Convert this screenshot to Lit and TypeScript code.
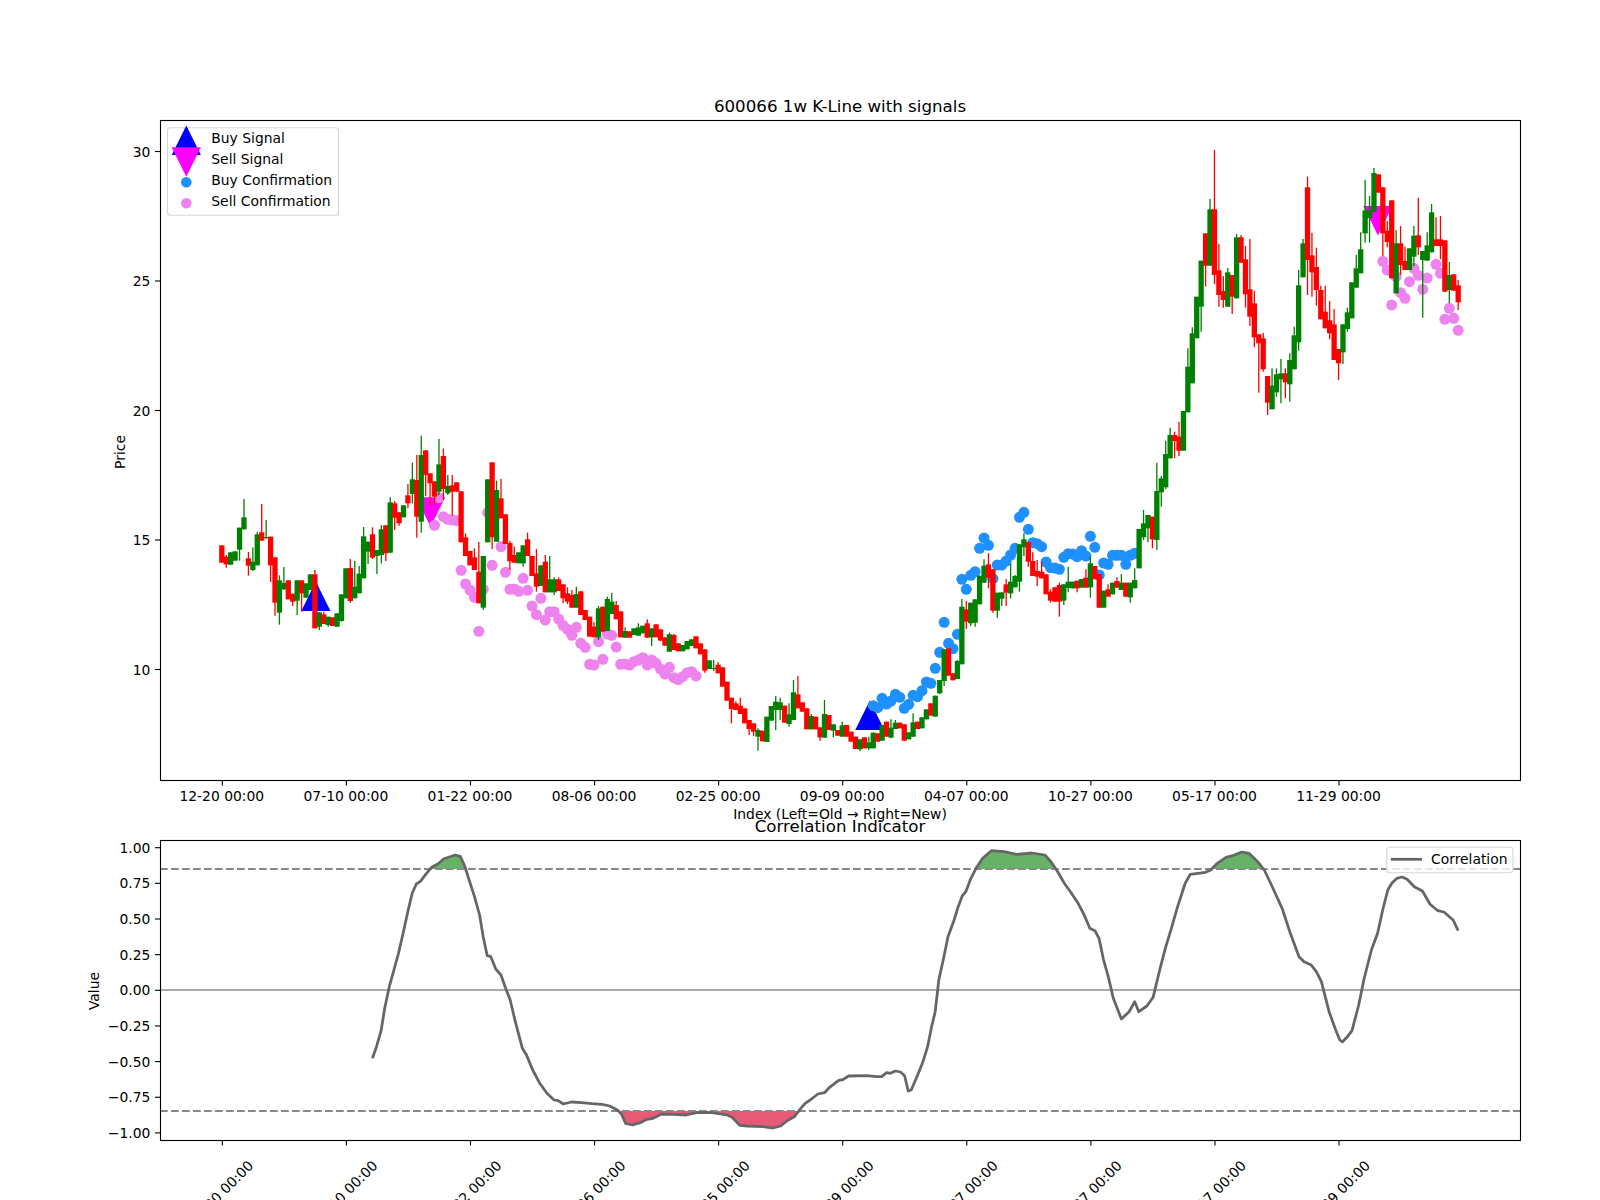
import { LitElement, html, svg, css } from "lit";
import { customElement } from "lit/decorators.js";

const X0 = 221.82;
const DX = 4.4314;
const xi = (i: number) => X0 + DX * i;

type Bar = { c: string; t: number; b: number; wt: number; wb: number };

const SEGMENTS: [number, string][] = [
  [420, `r 376 428;r 410 433 405 443;g 397 434;g 394 422;g 323 389 323 422;g 292 328 237 328;r 415 437 396 467;g 425 450 382 453;g 343 436 335 436;r 337 362 252 362;
g 351 354 300 357;r 350 436 350 486;r 412 548 412 587;g 481 578 466 614;g 489 508 441 510;r 481 538;r 521 545 521 558;g 481 542 481 585;r 481 520 481 575;g 490 533;
g 463 510;r 463 625 450 625;g 577 620 577 630;r 583 612 575 612;g 590 615 590 620;r 592 618;g 580 620;g 523 603 523 605;g 445 535;r 444 543 417 548;
g 500 535 423 535;g 461 520 438 520;g 349 475 321 475;g 365 395 365 432;r 343 413 322 417;g 390 408 390 462;g 328 405 315 430;r 316 400 316 423;g 247 398 232 400;r 250 293 243 330;
r 277 310 277 317;g 256 292;r 226 250 192 265;g 178 222 128 250;r 180 290 105 353;g 105 305 47 338;r 91 165 91 228;r 160 190 160 255;r 184 230 184 255;g 133 215 57 225;
r 108 207 86 240;g 198 220 165 225;r 196 215 165 287;r 187 215;r 214 367;r 352 408 340 408;r 393 436;r 412 450 385 450;r 455 550 366 550;g 408 563 408 570;
g 178 367;r 127 352 127 387;g 210 365 182 365;r 235 295 177 295;r 283 372;r 369 424 362 450;r 405 428 380 428;g 397 430;g 376 430 376 440;r 358 408 338 408`],
  [530, `r 78 138;r 130 170 57 185;g 106 168;r 95 187 75 187;g 148 187 78 187;g 148 187 142 195;r 148 183 142 183;r 163 205 163 220;r 190 215 172 222;r 195 233 180 233;
g 192 233 170 233;r 184 255;r 240 270;r 260 320;r 290 322 277 322;g 235 322 228 330;r 230 305;g 207 303 200 303;g 215 252 188 252;r 225 268 213 268;
r 244 322;g 303 323 292 323;r 304 323;g 295 315;g 292 317 280 317;g 287 310;r 280 323 268 323;g 295 322 295 348;r 283 322;r 298 332;
r 322 347;g 313 365 308 365;r 315 360 312 360;r 340 364;g 345 364;g 333 358;g 328 348;r 319 355;r 340 373;r 358 422 358 428;
g 391 417;g 414 417 390 423;r 404 430 396 430;r 412 470;r 455 512;r 503 537 503 580;r 520 540 514 540;r 527 552 503 552;r 535 580;r 570 597 570 615;
r 580 605 580 618;g 600 620 595 662;r 602 634;g 560 636;g 528 572;g 515 540 498 600;g 517 540 503 570;r 527 578;g 553 582 520 590;g 487 570 450 570;
r 493 535 438 535;r 517 545;r 535 598;g 558 598 552 598;r 560 598;r 592 622 592 632;g 552 623 510 623;r 555 600;g 583 602 583 622;r 600 617;
g 586 620 575 620;r 585 620;r 605 635;r 620 657;g 628 658 628 663;r 622 655;g 637 655 620 660`],
  [500, `g 698 745;r 700 725;g 675 722;r 665 710;g 683 713 658 715;g 668 687 660 687;r 668 685;r 673 722;g 697 718;g 667 710 640 710;
r 665 687;g 652 685;g 628 658;r 610 647;g 587 650;g 540 580 540 582;g 448 543 448 558;r 445 527;r 520 541;g 483 537 480 537;
g 320 493 297 493;r 328 365 303 387;g 308 370 308 378;g 298 368 298 380;g 227 313;g 197 248 178 248;r 193 233 160 265;r 208 332 208 338;g 278 332 278 353;g 277 296 277 318;
r 253 278 237 318;g 245 280 190 295;g 228 262 225 262;g 133 245 133 275;g 118 142 100 168;r 126 185 126 200;r 183 228 157 228;r 213 230 180 258;r 215 235 185 235;r 223 283;
r 275 302 268 308;r 262 305;r 255 305 248 350;g 253 302 253 315;g 245 264 200 277;g 245 265;r 242 265 242 277;g 237 263;r 233 263 208 263;g 190 262 170 293;
r 198 238;r 222 323;g 272 323;r 268 290 253 290;g 248 283;r 243 263 232 263;g 248 270 222 270;r 248 290;g 248 292 248 308;g 240 265 205 265`],
  [380, `g 447 565 447 565;g 430 472 390 480;g 405 445 405 487;r 410 478 410 505;g 333 480 248 510;g 295 337 288 380;g 222 322 182 327;g 165 235 143 235;r 165 183 155 235;r 170 212 125 228;g 93 212`],
  [140, `g 680 817 625 817;g 580 730 562 730;g 470 595;g 362 500 362 575;r 280 377 280 440;g 208 377 177 377;r 208 405 30 432;r 391 465 312 500;r 453 480 408 503;g 397 500 384 500;
r 405 470 405 522;g 292 475 282 475;r 292 368 285 368;r 358 463 318 503;r 448 530 297 558;r 490 592 453 622;r 583 610 583 758;r 595 688 578 695;r 708 788 708 825;g 737 808 685 808;
g 703 757 685 770;g 700 718 657 790;r 700 727 685 775;g 660 733 640 785;g 586 688 560 688;g 436 607 390 632;g 310 412 297 412;r 142 360 110 465;r 346 397 278 470;r 381 450 323 497;
r 450 538 437 538;r 515 565 437 565;r 541 580 483 598;r 553 660 507 660;r 627 670 627 720;g 553 637 553 672;g 517 567 503 575;g 427 535;g 385 443 345 443;g 328 400 277 400;
g 211 280 120 308;g 211 234 168 308;g 99 215 84 215;r 103 158;r 142 280 142 348;r 272 306 243 322;r 181 415;g 310 460 270 460;r 310 375 258 405;r 363 390 320 390;
g 325 390;g 287 350 258 378;r 286 322 173 345;g 333 360 333 533;g 316 362 277 362;g 217 337 192 337;r 298 318 232 318;r 298 318 228 358;r 301 455;g 405 450 366 490;
r 403 452;r 436 487 420 510`],
];

const BARS: Bar[] = SEGMENTS.flatMap(([oy, s]) =>
  s
    .replace(/\n/g, "")
    .split(";")
    .map((row) => {
      const [c, ...v] = row.trim().split(" ");
      const [t, b, wt = t, wb = b] = v.map(Number);
      const y = (n: number) => oy + n / 3;
      return { c: c === "r" ? "#ff0000" : "#008000", t: y(t), b: y(b), wt: y(wt), wb: y(wb) };
    })
);

type Dot = [number, number];
const dots = (oy: number, list: [number, number][]): Dot[] => list.map(([i, z]) => [xi(i), oy + z / 3]);

const PINK: Dot[] = [
  ...dots(420, [[48, 316], [49, 233], [50, 290], [51, 298], [52, 300], [53, 302], [54, 451], [55, 492], [56, 510], [57, 532], [58, 634], [59, 508], [60, 278], [61, 436], [63, 380], [64, 457], [65, 508], [66, 507], [67, 514], [68, 475]]),
  ...dots(530, [[69, 181], [70, 228], [71, 254], [72, 205], [73, 270], [74, 245], [75, 245], [76, 267], [77, 286], [78, 298], [79, 316], [80, 292], [81, 340], [82, 352], [83, 403], [84, 405], [85, 335], [86, 388], [87, 312], [88, 316], [89, 351], [90, 403], [91, 402], [92, 405], [93, 395], [94, 390], [95, 383], [96, 405], [97, 390], [98, 400], [99, 417], [100, 432], [101, 412], [102, 443], [103, 449], [104, 440], [105, 428], [106, 425], [107, 438]]),
  ...dots(140, [[262, 364], [263, 390], [264, 495], [265, 410], [266, 458], [267, 475], [268, 425], [269, 385], [270, 406], [271, 448], [272, 414], [274, 373], [275, 400], [276, 538], [277, 505], [278, 535], [279, 571]]),
];

const BLUE: Dot[] = dots(500, [[147, 617], [148, 623], [149, 595], [150, 612], [151, 603], [152, 583], [153, 592], [154, 625], [155, 613], [156, 586], [157, 590], [158, 572], [159, 546], [160, 550], [161, 505], [162, 457], [163, 367], [164, 430], [165, 446], [166, 403], [167, 238], [168, 268], [169, 226], [170, 215], [171, 145], [172, 114], [173, 136], [174, 236], [175, 195], [176, 195], [177, 183], [178, 165], [179, 145], [180, 52], [181, 37], [182, 88], [183, 128], [184, 131], [185, 140], [186, 186], [187, 203], [188, 204], [189, 208], [190, 172], [191, 161], [192, 162], [193, 170], [194, 152], [195, 168], [196, 109], [197, 142], [198, 225], [199, 189], [200, 193], [201, 166], [202, 166], [203, 166], [204, 193], [205, 166], [206, 160]]);

const CURVE_A: [number, number][] = [[730, 895], [738, 860], [747, 812], [754, 745], [763, 680], [772, 630], [781, 580], [790, 520], [800, 450], [808, 400], [816, 372], [824, 364], [836, 340], [846, 322], [858, 312], [870, 296], [882, 290], [892, 285], [902, 289], [910, 315], [920, 362], [930, 410], [940, 465], [947, 530], [955, 587], [962, 590], [972, 628], [982, 645], [990, 680], [1000, 720], [1010, 785], [1024, 865], [1032, 885], [1044, 930], [1058, 970], [1072, 1000], [1086, 1020], [1094, 1022], [1104, 1032], [1120, 1026], [1140, 1028], [1160, 1031], [1180, 1033], [1195, 1038], [1210, 1050], [1218, 1062], [1226, 1090], [1240, 1095], [1255, 1088], [1268, 1078], [1280, 1075], [1297, 1062], [1320, 1063], [1345, 1065], [1365, 1058], [1395, 1058], [1425, 1065], [1435, 1072], [1450, 1096], [1465, 1098], [1495, 1100], [1515, 1104], [1530, 1098], [1545, 1080], [1557, 1070]];
const CURVE_B: [number, number][] = [[0, 1048], [10, 1030], [20, 1020], [35, 1002], [48, 998], [58, 982], [75, 962], [85, 958], [95, 948], [130, 947], [150, 950], [160, 950], [170, 938], [177, 940], [187, 933], [197, 936], [205, 947], [212, 993], [218, 990], [228, 955], [240, 910], [250, 860], [258, 800], [265, 755], [272, 660], [282, 590], [290, 530], [302, 480], [310, 440], [318, 408], [325, 395], [335, 355], [347, 320], [358, 295], [375, 272], [400, 275], [425, 283], [455, 279], [480, 285], [492, 305], [505, 335], [518, 370], [530, 395], [545, 430], [557, 465], [568, 505], [578, 512], [586, 535], [595, 600], [605, 655], [614, 715], [630, 777], [645, 755], [656, 725], [664, 755], [680, 738], [692, 712], [705, 630], [716, 565], [726, 515], [740, 440], [755, 370], [765, 343], [780, 340], [795, 337], [805, 330], [818, 310], [835, 292], [850, 286], [866, 276], [880, 280], [897, 305], [910, 330], [925, 378], [945, 445], [960, 515], [978, 590], [988, 605], [1002, 615], [1012, 635], [1022, 665], [1037, 755], [1050, 810], [1058, 840], [1063, 846], [1072, 832], [1082, 812], [1095, 735], [1105, 660], [1120, 570], [1132, 520], [1142, 450], [1152, 390], [1160, 370], [1170, 355], [1180, 351], [1190, 358], [1204, 380], [1220, 393], [1235, 433], [1250, 452], [1262, 456], [1280, 480], [1290, 512]];
const CURVE: [number, number][] = [
  ...CURVE_A.map(([x, y]): [number, number] => [x / 1.96, 760 + y / 3]),
  ...CURVE_B.map(([x, y]): [number, number] => [800 + x / 1.96, 760 + y / 3]),
];
const curveD = CURVE.map(([x, y]) => `${x.toFixed(1)},${y.toFixed(1)}`).join(" ");
const X_FIRST = CURVE[0][0];
const X_LAST = CURVE[CURVE.length - 1][0];
const Y_HI = 869;
const Y_LO = 1111;

const TICK_LABELS = ["12-20 00:00", "07-10 00:00", "01-22 00:00", "08-06 00:00", "02-25 00:00", "09-09 00:00", "04-07 00:00", "10-27 00:00", "05-17 00:00", "11-29 00:00"];
const PRICE_TICKS: [string, number][] = [["30", 151.5], ["25", 281], ["20", 410.5], ["15", 540], ["10", 669.5]];
const VALUE_TICKS: [string, number][] = [
  ["1.00", 1], ["0.75", 0.75], ["0.50", 0.5], ["0.25", 0.25], ["0.00", 0],
  ["\u22120.25", -0.25], ["\u22120.50", -0.5], ["\u22120.75", -0.75], ["\u22121.00", -1],
].map(([l, v]) => [l as string, 990.3 - 142.6 * (v as number)]);

const up = (cx: number, base: number) => `${cx - 14.6},${base} ${cx},${base - 29.5} ${cx + 14.6},${base}`;
const down = (cx: number, top: number) => `${cx - 14.6},${top} ${cx},${top + 29.5} ${cx + 14.6},${top}`;

@customElement("app-root")
export class AppRoot extends LitElement {
  static styles = css`
    :host {
      display: block;
      width: 1600px;
      height: 1200px;
      overflow: hidden;
      background: #fff;
    }
    .figure {
      display: block;
      width: 1600px;
      height: 1200px;
    }
    text {
      font-family: "DejaVu Sans", sans-serif;
      font-size: 13.89px;
      fill: #000;
    }
    .title {
      font-size: 16.67px;
      text-anchor: middle;
    }
    .mid {
      text-anchor: middle;
    }
    .end {
      text-anchor: end;
    }
    .spine {
      fill: none;
      stroke: #000;
      stroke-width: 1.11;
    }
    .tick {
      stroke: #000;
      stroke-width: 1.11;
    }
    .legend-box {
      fill: #fff;
      fill-opacity: 0.8;
      stroke: #d6d6d6;
      stroke-width: 1.11;
    }
    .dash {
      stroke: #888;
      stroke-width: 2.08;
      stroke-dasharray: 7.7 3.3;
    }
    .zero {
      stroke: #aaa;
      stroke-width: 2.08;
    }
    .curve {
      fill: none;
      stroke: #666;
      stroke-width: 2.78;
      stroke-linejoin: round;
    }
    .fill-hi {
      fill: #008000;
      fill-opacity: 0.6;
    }
    .fill-lo {
      fill: #dc143c;
      fill-opacity: 0.7;
    }
  `;

  private candles() {
    return BARS.map((b, i) => {
      const x = xi(i);
      return svg`<line x1=${x} x2=${x} y1=${b.wt} y2=${b.wb} stroke=${b.c} stroke-width="1.3"></line>
        <rect x=${x - 2.65} y=${b.t} width="5.3" height=${b.b - b.t} fill=${b.c}></rect>`;
    });
  }

  private topAxes() {
    return svg`
      ${TICK_LABELS.map((l, i) => {
        const x = xi(i * 28);
        return svg`<line class="tick" x1=${x + 0.5} x2=${x + 0.5} y1="780.5" y2="785.5"></line>
          <text class="mid" x=${x} y="801">${l}</text>`;
      })}
      ${PRICE_TICKS.map(([l, y]) => svg`<line class="tick" x1="155" x2="160.5" y1=${y} y2=${y}></line>
        <text class="end" x="150.3" y=${y + 5}>${l}</text>`)}
      <text class="mid" transform="translate(124.5 452) rotate(-90)">Price</text>
      <text class="title" x="840" y="112">600066 1w K-Line with signals</text>
      <text class="mid" x="840" y="819">Index (Left=Old → Right=New)</text>
      <rect class="spine" x="160.5" y="120.5" width="1360" height="660"></rect>`;
  }

  private topLegend() {
    return svg`
      <rect class="legend-box" x="167.5" y="127.7" width="171" height="87.6" rx="3" ry="3"></rect>
      <polygon points=${up(186.3, 155)} fill="#0000ff"></polygon>
      <polygon points=${down(186.3, 147.3)} fill="#ff00ff"></polygon>
      <circle cx="186.3" cy="182.3" r="5.3" fill="#1e90ff"></circle>
      <circle cx="186.3" cy="203.3" r="5.3" fill="#ee82ee"></circle>
      <text x="211.3" y="143.2">Buy Signal</text>
      <text x="211.3" y="164.2">Sell Signal</text>
      <text x="211.3" y="185.2">Buy Confirmation</text>
      <text x="211.3" y="206.2">Sell Confirmation</text>`;
  }

  private bottomAxes() {
    return svg`
      <defs>
        <clipPath id="hi"><rect x="160" y="840" width="1360" height=${Y_HI - 840}></rect></clipPath>
        <clipPath id="lo"><rect x="160" y=${Y_LO} width="1360" height=${1140 - Y_LO}></rect></clipPath>
      </defs>
      <line class="zero" x1="160" x2="1520" y1="990" y2="990"></line>
      <path class="fill-hi" clip-path="url(#hi)" d="M${X_FIRST},${Y_HI} L${curveD} L${X_LAST},${Y_HI} Z"></path>
      <path class="fill-lo" clip-path="url(#lo)" d="M${X_FIRST},${Y_LO} L${curveD} L${X_LAST},${Y_LO} Z"></path>
      <line class="dash" x1="160" x2="1520" y1=${Y_HI} y2=${Y_HI}></line>
      <line class="dash" x1="160" x2="1520" y1=${Y_LO} y2=${Y_LO}></line>
      <polyline class="curve" points=${curveD}></polyline>
      ${TICK_LABELS.map((l, i) => {
        const x = xi(i * 28);
        return svg`<line class="tick" x1=${x + 0.5} x2=${x + 0.5} y1="1140.5" y2="1145.5"></line>
          <text class="mid" transform="translate(${x - 1} 1193) rotate(-45)" y="5">${l}</text>`;
      })}
      ${VALUE_TICKS.map(([l, y]) => svg`<line class="tick" x1="155" x2="160.5" y1=${y} y2=${y}></line>
        <text class="end" x="150.3" y=${y + 5}>${l}</text>`)}
      <text class="mid" transform="translate(99 991) rotate(-90)">Value</text>
      <text class="title" x="840" y="832">Correlation Indicator</text>
      <rect class="legend-box" x="1386.7" y="847.3" width="126.3" height="25.4" rx="3" ry="3"></rect>
      <line x1="1390.8" x2="1422" y1="859.3" y2="859.3" stroke="#666" stroke-width="2.78"></line>
      <text x="1431" y="864">Correlation</text>
      <rect class="spine" x="160.5" y="840.5" width="1360" height="300"></rect>`;
  }

  render() {
    return html`<svg class="figure" viewBox="0 0 1600 1200" xmlns="http://www.w3.org/2000/svg">
      <polygon points=${up(xi(21) + 1, 611)} fill="#0000ff"></polygon>
      <polygon points=${up(xi(146) + 1, 730)} fill="#0000ff"></polygon>
      <polygon points=${down(xi(47) + 0.5, 497.3)} fill="#ff00ff"></polygon>
      <polygon points=${down(xi(261) - 0.5, 206)} fill="#ff00ff"></polygon>
      ${BLUE.map(([x, y]) => svg`<circle cx=${x} cy=${y} r="5.5" fill="#1e90ff"></circle>`)}
      ${PINK.map(([x, y]) => svg`<circle cx=${x} cy=${y} r="5.5" fill="#ee82ee"></circle>`)}
      ${this.candles()}
      ${this.topAxes()}
      ${this.topLegend()}
      ${this.bottomAxes()}
    </svg>`;
  }
}
